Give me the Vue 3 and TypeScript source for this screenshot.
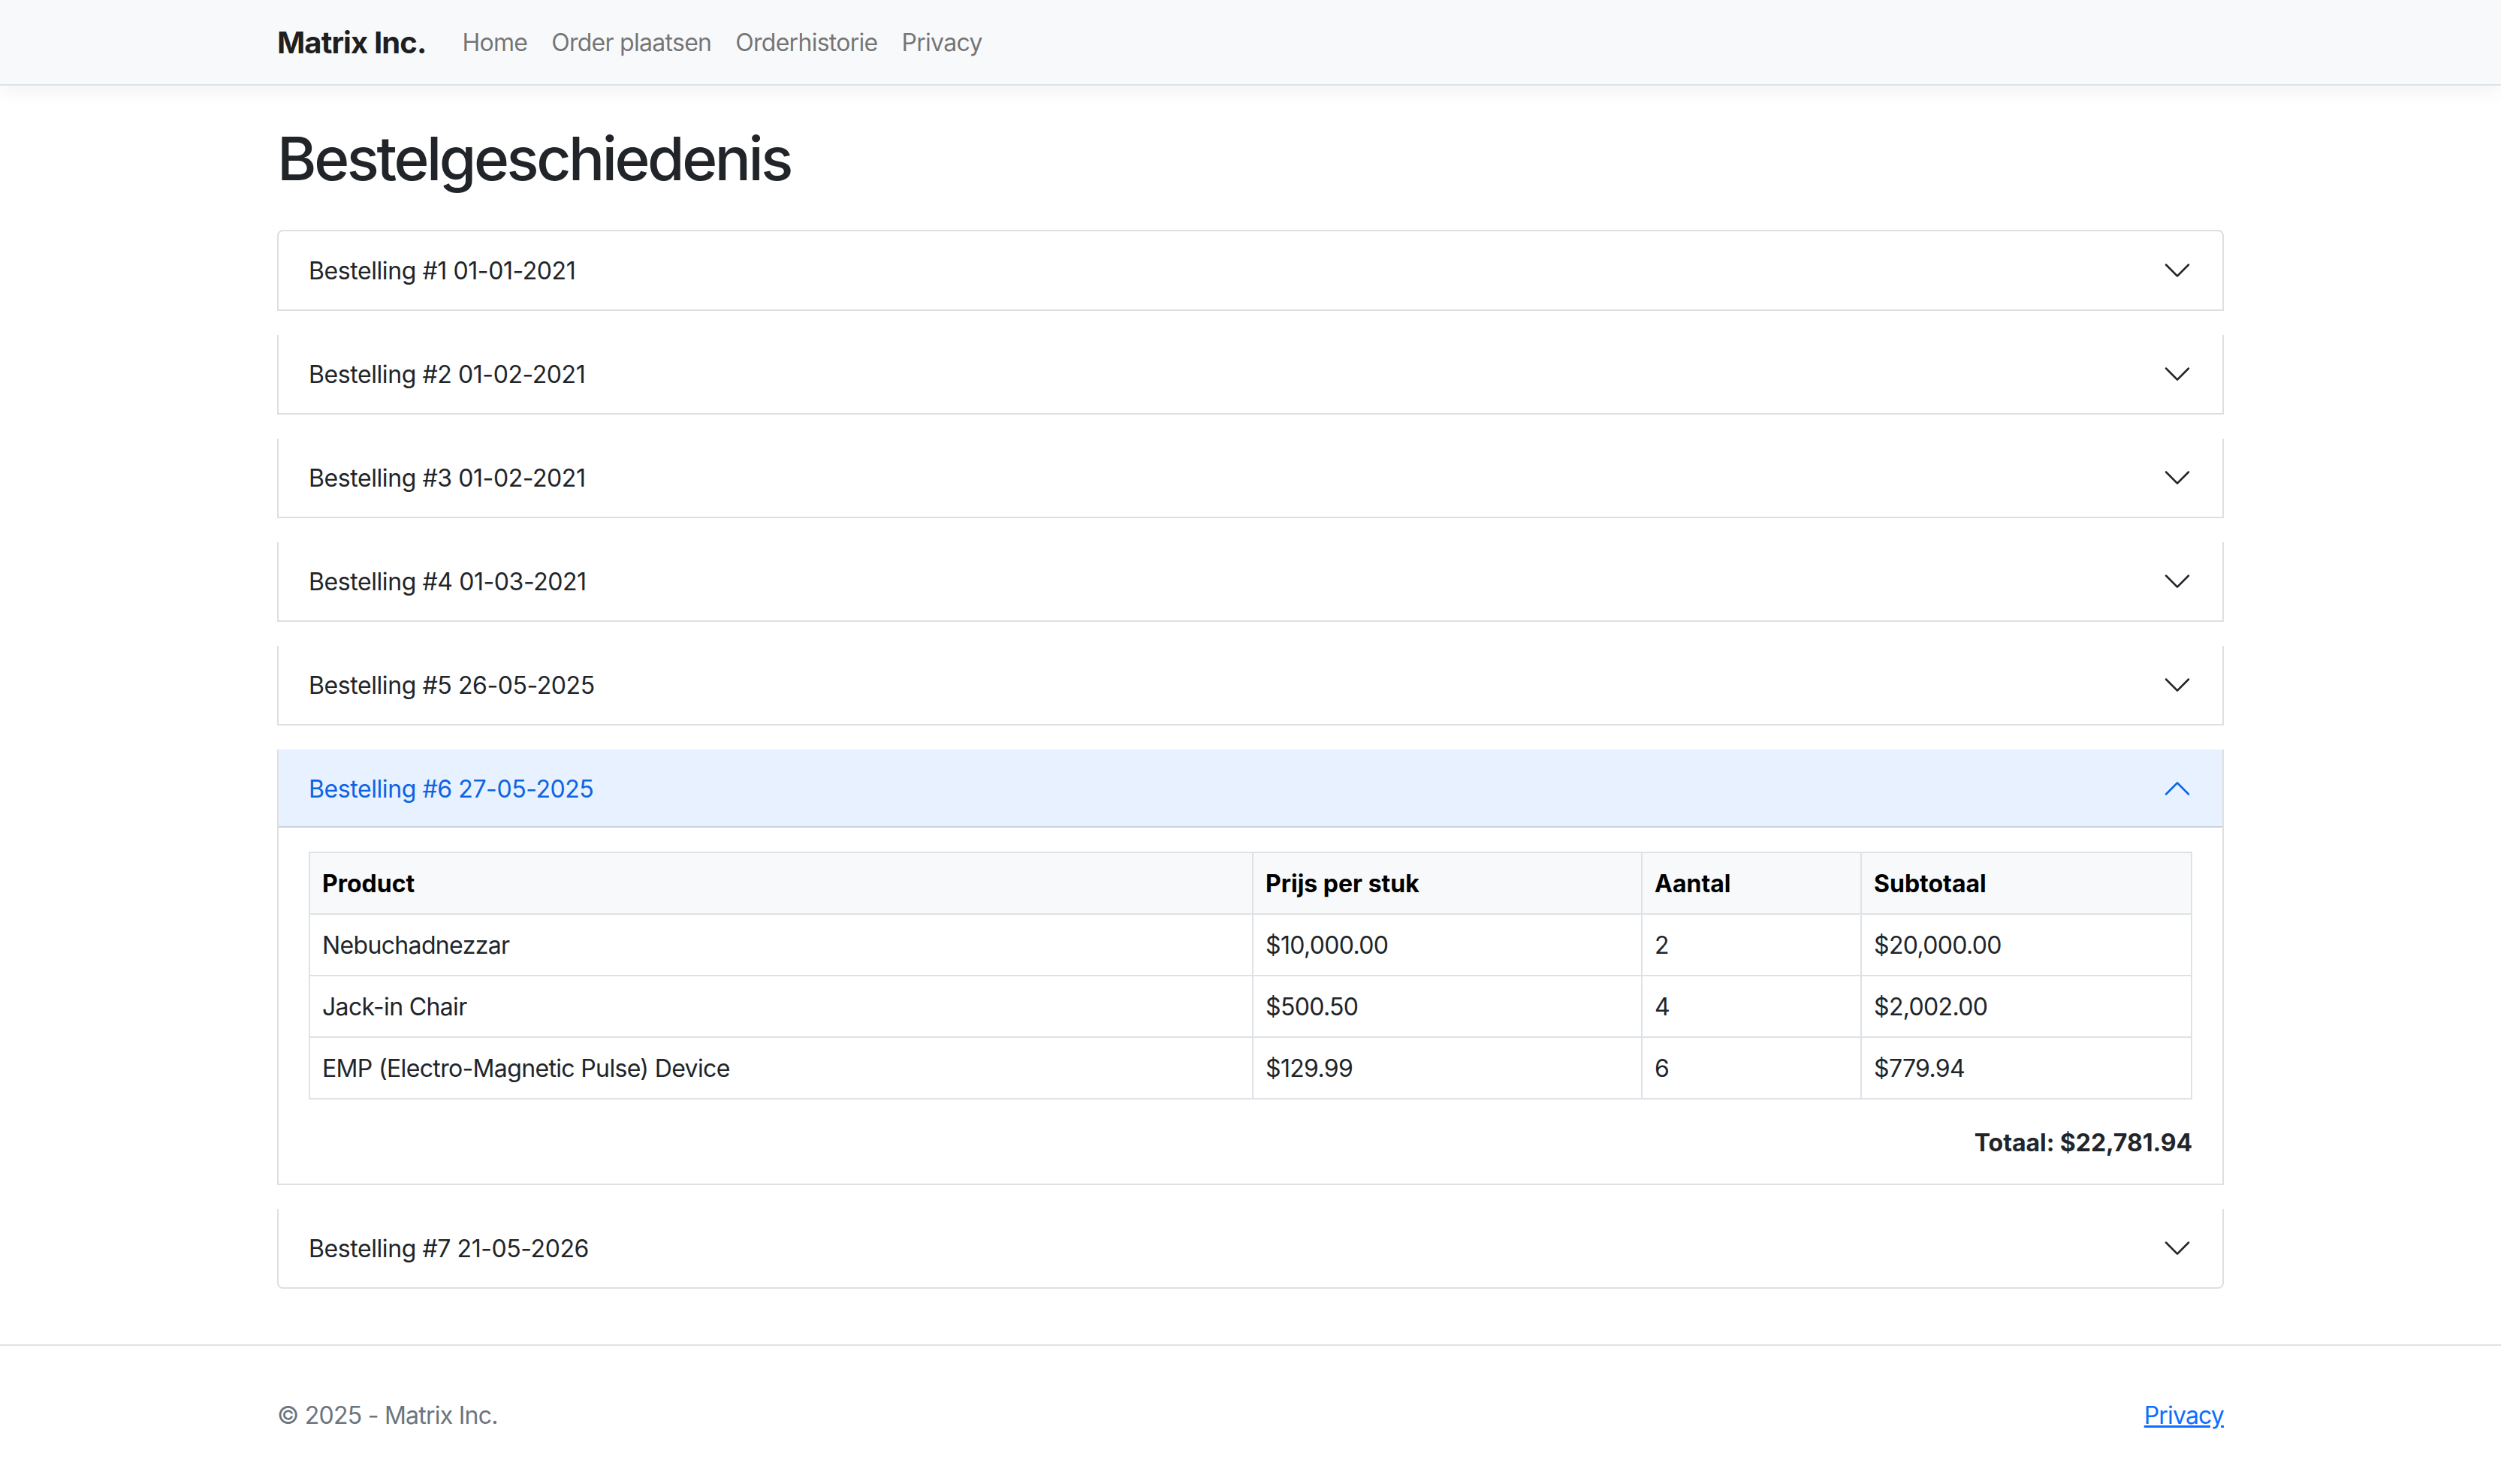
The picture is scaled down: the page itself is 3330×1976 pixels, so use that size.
<template>
  <header class="navbar">
    <div class="container nav-inner">
      <a class="brand" href="#">Matrix Inc.</a>
      <nav class="nav-links">
        <a v-for="link in links" :key="link" class="nav-link" href="#">{{ link }}</a>
      </nav>
    </div>
  </header>

  <main class="container page">
    <h1>Bestelgeschiedenis</h1>

    <div class="accordion">
      <div v-for="order in orders" :key="order.id" class="accordion-item">
        <h2 class="accordion-header">
          <button
            class="accordion-button"
            :class="{ open: openId === order.id }"
            type="button"
            @click="toggle(order.id)"
          >
            <span class="order-title">Bestelling #{{ order.id }} {{ order.date }}</span>
            <svg class="chevron" viewBox="0 0 16 16" aria-hidden="true">
              <path
                fill-rule="evenodd"
                d="M1.646 4.646a.5.5 0 0 1 .708 0L8 10.293l5.646-5.647a.5.5 0 0 1 .708.708l-6 6a.5.5 0 0 1-.708 0l-6-6a.5.5 0 0 1 0-.708z"
              />
            </svg>
          </button>
        </h2>

        <div v-if="openId === order.id" class="accordion-body">
          <table class="lines">
            <colgroup>
              <col class="col-product" />
              <col class="col-price" />
              <col class="col-qty" />
              <col class="col-sub" />
            </colgroup>
            <thead>
              <tr>
                <th>Product</th>
                <th>Prijs per stuk</th>
                <th>Aantal</th>
                <th>Subtotaal</th>
              </tr>
            </thead>
            <tbody>
              <tr v-for="line in order.lines" :key="line.product">
                <td>{{ line.product }}</td>
                <td>{{ money(line.price) }}</td>
                <td>{{ line.qty }}</td>
                <td>{{ money(line.price * line.qty) }}</td>
              </tr>
            </tbody>
          </table>
          <p class="total">Totaal: {{ money(total(order.lines)) }}</p>
        </div>
      </div>
    </div>
  </main>

  <footer class="footer">
    <div class="container footer-inner">
      <span>&copy; 2025 - Matrix Inc.</span>
      <a class="footer-link" href="#">Privacy</a>
    </div>
  </footer>
</template>

<script setup lang="ts">
import { ref } from 'vue';

interface OrderLine {
  product: string;
  price: number;
  qty: number;
}

interface Order {
  id: number;
  date: string;
  lines: OrderLine[];
}

const links = ['Home', 'Order plaatsen', 'Orderhistorie', 'Privacy'];

const orders: Order[] = [
  { id: 1, date: '01-01-2021', lines: [] },
  { id: 2, date: '01-02-2021', lines: [] },
  { id: 3, date: '01-02-2021', lines: [] },
  { id: 4, date: '01-03-2021', lines: [] },
  { id: 5, date: '26-05-2025', lines: [] },
  {
    id: 6,
    date: '27-05-2025',
    lines: [
      { product: 'Nebuchadnezzar', price: 10000, qty: 2 },
      { product: 'Jack-in Chair', price: 500.5, qty: 4 },
      { product: 'EMP (Electro-Magnetic Pulse) Device', price: 129.99, qty: 6 },
    ],
  },
  { id: 7, date: '21-05-2026', lines: [] },
];

const openId = ref<number | null>(6);

function toggle(id: number) {
  openId.value = openId.value === id ? null : id;
}

function money(value: number) {
  return '$' + value.toLocaleString('en-US', { minimumFractionDigits: 2, maximumFractionDigits: 2 });
}

function total(lines: OrderLine[]) {
  return lines.reduce((sum, line) => sum + line.price * line.qty, 0);
}
</script>

<style>
body {
  margin: 0;
  background: #fff;
}
</style>

<style scoped>
.container {
  box-sizing: border-box;
  width: 2640px;
  margin: 0 auto;
  padding: 0 24px;
  font-family: Inter, 'Liberation Sans', sans-serif;
  font-size: 32px;
  line-height: 48px;
  color: #212529;
}

/* Navbar */
.navbar {
  box-sizing: border-box;
  height: 114px;
  background: #f8f9fa;
  border-bottom: 2px solid #dee2e6;
  box-shadow: 0 8px 24px rgba(0, 0, 0, 0.05);
}

.nav-inner {
  display: flex;
  align-items: center;
  height: 112px;
  padding-top: 2px;
}

.brand {
  margin-right: 32px;
  font-size: 40px;
  line-height: 60px;
  font-weight: 700;
  letter-spacing: -0.9px;
  color: rgba(0, 0, 0, 0.9);
  text-decoration: none;
}

.nav-links {
  display: flex;
}

.nav-link {
  padding: 0 16px;
  letter-spacing: -0.72px;
  color: rgba(0, 0, 0, 0.55);
  text-decoration: none;
}

/* Page */
.page {
  padding-top: 49px;
}

h1 {
  margin: 0 0 47px;
  font-size: 80px;
  line-height: 96px;
  font-weight: 500;
  letter-spacing: -3.4px;
}

/* Accordion */
.accordion-item {
  box-sizing: border-box;
  margin-bottom: 32px;
  background: #fff;
  border: 2px solid rgba(0, 0, 0, 0.125);
  border-top: 0;
}

.accordion-item:first-child {
  border-top: 2px solid rgba(0, 0, 0, 0.125);
  border-radius: 8px 8px 0 0;
}

.accordion-item:last-child {
  margin-bottom: 0;
  border-radius: 0 0 8px 8px;
}

.accordion-header {
  margin: 0;
  font-size: 32px;
  font-weight: 500;
  line-height: 38.4px;
}

.accordion-button {
  display: flex;
  align-items: center;
  justify-content: space-between;
  width: 100%;
  padding: 32px 40px;
  background: none;
  border: 0;
  font: inherit;
  font-weight: 400;
  color: #212529;
  text-align: left;
  cursor: pointer;
}

.order-title {
  padding-top: 2px;
  line-height: 36px;
  letter-spacing: -0.42px;
}

.accordion-button.open {
  background: #e7f1ff;
  color: #0c63e4;
  box-shadow: inset 0 -2px 0 rgba(0, 0, 0, 0.125);
}

.chevron {
  flex-shrink: 0;
  width: 40px;
  height: 40px;
  fill: #212529;
}

.accordion-button.open .chevron {
  fill: #0c63e4;
  transform: rotate(-180deg);
}

.accordion-body {
  padding: 32px 40px;
}

/* Table */
.lines {
  width: calc(100% - 2px);
  margin-bottom: 32px;
  border-collapse: collapse;
  table-layout: fixed;
}

.col-product { width: 1256px; }
.col-price { width: 518px; }
.col-qty { width: 292px; }
.col-sub { width: 440px; }

.lines th,
.lines td {
  padding: 17px 16px 15px;
  border: 2px solid #dee2e6;
  text-align: left;
}

.lines td {
  letter-spacing: -0.65px;
}

.lines th {
  background: #f8f9fa;
  color: #000;
  font-weight: 700;
}

.total {
  margin: 0;
  padding-top: 2px;
  height: 46px;
  text-align: right;
  font-weight: 700;
  letter-spacing: -0.05px;
}

/* Footer */
.footer {
  margin-top: 74px;
  padding: 69px 0 71px;
  border-top: 2px solid #dee2e6;
}

.footer-inner {
  display: flex;
  justify-content: space-between;
  letter-spacing: -0.75px;
  color: #6c757d;
}

.footer-link {
  letter-spacing: -0.85px;
  color: #0d6efd;
  text-decoration: underline;
}
</style>
